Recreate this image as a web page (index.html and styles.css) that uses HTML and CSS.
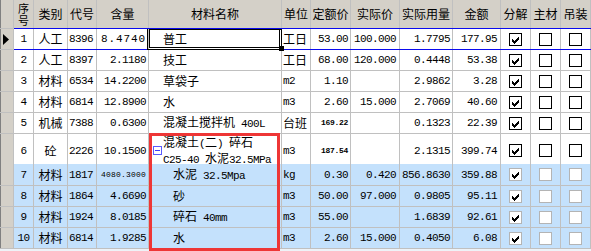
FILE: index.html
```html
<!DOCTYPE html>
<html lang="zh-CN">
<head>
<meta charset="utf-8">
<title>材料分析</title>
<link rel="stylesheet" href="styles.css">
</head>
<body>
<div class="grid">
  <div class="row head">
    <div class="ind"></div>
    <div class="stack"><span>序</span><span>号</span></div>
    <div>类别</div>
    <div>代号</div>
    <div>含量</div>
    <div>材料名称</div>
    <div>单位</div>
    <div>定额价</div>
    <div>实际价</div>
    <div>实际用量</div>
    <div>金额</div>
    <div>分解</div>
    <div>主材</div>
    <div>吊装</div>
  </div>

  <div class="row b">
    <div class="ind"><svg class="tri" width="6" height="11" viewBox="0 0 6 11"><polygon points="0,0 6,5.5 0,11" fill="#000"/></svg></div>
    <div>1</div><div>人工</div><div>8396</div><div class="wide">8.4740</div>
    <div>普工</div><div>工日</div><div>53.00</div><div>100.000</div><div>1.7795</div><div>177.95</div>
    <div><span class="cb on"></span></div><div><span class="cb"></span></div><div><span class="cb"></span></div>
  </div>

  <div class="row b">
    <div class="ind"></div>
    <div>2</div><div>人工</div><div>8397</div><div>2.1180</div>
    <div>技工</div><div>工日</div><div>68.00</div><div>120.000</div><div>0.4448</div><div>53.38</div>
    <div><span class="cb on"></span></div><div><span class="cb"></span></div><div><span class="cb"></span></div>
  </div>

  <div class="row b">
    <div class="ind"></div>
    <div>3</div><div>材料</div><div>6534</div><div>14.2200</div>
    <div>草袋子</div><div><span class="m">m2</span></div><div>1.10</div><div></div><div>2.9862</div><div>3.28</div>
    <div><span class="cb on"></span></div><div><span class="cb"></span></div><div><span class="cb"></span></div>
  </div>

  <div class="row b">
    <div class="ind"></div>
    <div>4</div><div>材料</div><div>6814</div><div>12.8900</div>
    <div>水</div><div><span class="m">m3</span></div><div>2.60</div><div>15.000</div><div>2.7069</div><div>40.60</div>
    <div><span class="cb on"></span></div><div><span class="cb"></span></div><div><span class="cb"></span></div>
  </div>

  <div class="row b">
    <div class="ind"></div>
    <div>5</div><div>机械</div><div>7388</div><div>0.6300</div>
    <div><span>混凝土搅拌机<span class="m"> 400L</span></span></div><div>台班</div><div class="tiny">169.22</div><div></div><div>0.1323</div><div>22.39</div>
    <div><span class="cb on"></span></div><div><span class="cb"></span></div><div><span class="cb"></span></div>
  </div>

  <div class="row b tall">
    <div class="ind"></div>
    <div>6</div><div>砼</div><div>2226</div><div>10.1500</div>
    <div class="tree">
      <svg class="minus" width="9" height="9" viewBox="0 0 9 9"><rect x="0.5" y="0.5" width="8" height="8" fill="#fff" stroke="#5a5aff"/><line x1="2" y1="4.5" x2="7" y2="4.5" stroke="#3c3cff"/></svg>
      <div class="lines"><div>混凝土<span class="m">(</span>二<span class="m">)&nbsp;</span>碎石</div><div><span class="m">C25-40&nbsp;</span>水泥<span class="m">32.5MPa</span></div></div>
    </div>
    <div><span class="m">m3</span></div><div class="tiny">187.54</div><div></div><div>2.1315</div><div>399.74</div>
    <div><span class="cb on"></span></div><div><span class="cb"></span></div><div><span class="cb"></span></div>
  </div>

  <div class="row b sel r7">
    <div class="ind"></div>
    <div>7</div><div>材料</div><div>1817</div><div class="tiny wide9">4080.3000</div>
    <div class="child"><span>水泥<span class="m"> 32.5Mpa</span></span></div><div><span class="m">kg</span></div><div>0.30</div><div>0.420</div><div>856.8630</div><div>359.88</div>
    <div><span class="cb dim on"></span></div><div><span class="cb dim"></span></div><div><span class="cb dim"></span></div>
  </div>

  <div class="row b sel">
    <div class="ind"></div>
    <div>8</div><div>材料</div><div>1864</div><div>4.6690</div>
    <div class="child">砂</div><div><span class="m">m3</span></div><div>50.00</div><div>97.000</div><div>0.9805</div><div>95.11</div>
    <div><span class="cb dim on"></span></div><div><span class="cb dim"></span></div><div><span class="cb dim"></span></div>
  </div>

  <div class="row b sel">
    <div class="ind"></div>
    <div>9</div><div>材料</div><div>1924</div><div>8.0185</div>
    <div class="child"><span>碎石<span class="m"> 40mm</span></span></div><div><span class="m">m3</span></div><div>55.00</div><div></div><div>1.6839</div><div>92.61</div>
    <div><span class="cb dim on"></span></div><div><span class="cb dim"></span></div><div><span class="cb dim"></span></div>
  </div>

  <div class="row b sel">
    <div class="ind"></div>
    <div>10</div><div>材料</div><div>6814</div><div>1.9285</div>
    <div class="child">水</div><div><span class="m">m3</span></div><div>2.60</div><div>15.000</div><div>0.4050</div><div>6.08</div>
    <div><span class="cb dim on"></span></div><div><span class="cb dim"></span></div><div><span class="cb dim"></span></div>
  </div>

  <div class="cur-line"></div>
  <div class="edit-box"></div>
  <div class="handle"></div>
  <div class="red-box"></div>
</div>
</body>
</html>
```

FILE: styles.css
```css
* { box-sizing: border-box; }
html, body { margin: 0; padding: 0; }
body {
  width: 591px;
  height: 251px;
  overflow: hidden;
  background: #eef2f7;
  color: #000;
  font-family: "Noto Sans CJK SC", sans-serif;
  font-size: 12px;
  line-height: 14px;
}

.grid {
  position: relative;
  width: 591px;
  display: flex;
  flex-direction: column;
  gap: 1px;
  background: #c0c0c0;
  border-bottom: 1px solid #c0c0c0;
}

.row {
  display: grid;
  grid-template-columns: 13px 19px 33px 28px 51px 132px 28px 39px 48px 52px 47px 29px 29px 29px;
  column-gap: 1px;
  padding-right: 1px;
  height: 20px;
}
.row > div {
  display: flex;
  align-items: center;
  background: #fff;
  white-space: nowrap;
  overflow: hidden;
}
.row > .ind {
  background: #d4d0c8;
  border-left: 1px solid #808080;
  padding-left: 2px;
}
.tri { display: block; }

/* header */
.head { height: 28px; }
.head > div {
  background: #d4d0c8;
  justify-content: center;
}
.head > .stack {
  flex-direction: column;
  font-size: 11px;
  line-height: 12px;
  overflow: visible;
}

/* body rows */
.tall { height: 29px; }
.r7 { height: 21px; }

.b > :nth-child(2),
.b > :nth-child(3),
.b > :nth-child(n+12) { justify-content: center; }
.b > :nth-child(4),
.b > :nth-child(7) { padding-left: 1px; }
.b > :nth-child(5),
.b > :nth-child(8),
.b > :nth-child(9),
.b > :nth-child(10),
.b > :nth-child(11) { justify-content: flex-end; }
.b > :nth-child(5),
.b > :nth-child(8),
.b > :nth-child(10) { padding-right: 2px; }
.b > :nth-child(9),
.b > :nth-child(11) { padding-right: 3px; }
.b > :nth-child(6) { padding-left: 14px; }
.b > .child { padding-left: 24px; }

.b > :nth-child(2),
.b > :nth-child(4),
.b > :nth-child(5),
.b > :nth-child(8),
.b > :nth-child(9),
.b > :nth-child(10),
.b > :nth-child(11),
.m {
  font-family: "Liberation Mono", monospace;
  font-size: 11px;
  letter-spacing: -0.6px;
}
.m { white-space: pre; }
.b > .wide { letter-spacing: 0.9px; }
.b > .tiny {
  font-size: 8px;
  font-weight: bold;
  letter-spacing: -0.3px;
}
.b > .wide9 { font-weight: normal; letter-spacing: 0.2px; }

.sel > div:not(.ind) { background: #c4e1fc; }

/* tree node */
.b > .tree { padding-left: 4px; gap: 1px; overflow: visible; }
.minus { display: block; flex: none; }
.lines { line-height: 13px; padding-top: 1px; }

/* checkboxes */
.cb {
  display: block;
  width: 13px;
  height: 13px;
  border: 1px solid #000;
  background: #fff;
}
.cb.dim { border-color: #b4b4b4; }
.cb.on {
  background: #fff url("data:image/svg+xml,%3Csvg xmlns='http://www.w3.org/2000/svg' width='11' height='11'%3E%3Cpolygon transform='translate(-1,0)' shape-rendering='crispEdges' fill='%23000' points='3,5 4,5 4,6 5,6 5,7 6,7 6,6 7,6 7,5 8,5 8,4 9,4 9,3 10,3 10,6 9,6 9,7 8,7 8,8 7,8 7,9 6,9 6,10 5,10 5,9 4,9 4,8 3,8'/%3E%3C/svg%3E") no-repeat 0 0;
}

/* overlays */
.cur-line {
  position: absolute;
  left: 14px;
  top: 28px;
  width: 577px;
  height: 22px;
  border-top: 1px solid #0a0aee;
  border-bottom: 1px solid #0a0aee;
}
.edit-box {
  position: absolute;
  left: 147px;
  top: 29px;
  width: 135px;
  height: 21px;
  border-top: 1px solid #000;
  border-left: 3px double #000;
  border-right: 3px double #000;
  border-bottom: 3px double #000;
}
.handle {
  position: absolute;
  left: 279px;
  top: 46px;
  width: 5px;
  height: 5px;
  background: #000;
}
.red-box {
  position: absolute;
  left: 149px;
  top: 133px;
  width: 131px;
  height: 118px;
  border: 3px solid #ee3636;
}
```
